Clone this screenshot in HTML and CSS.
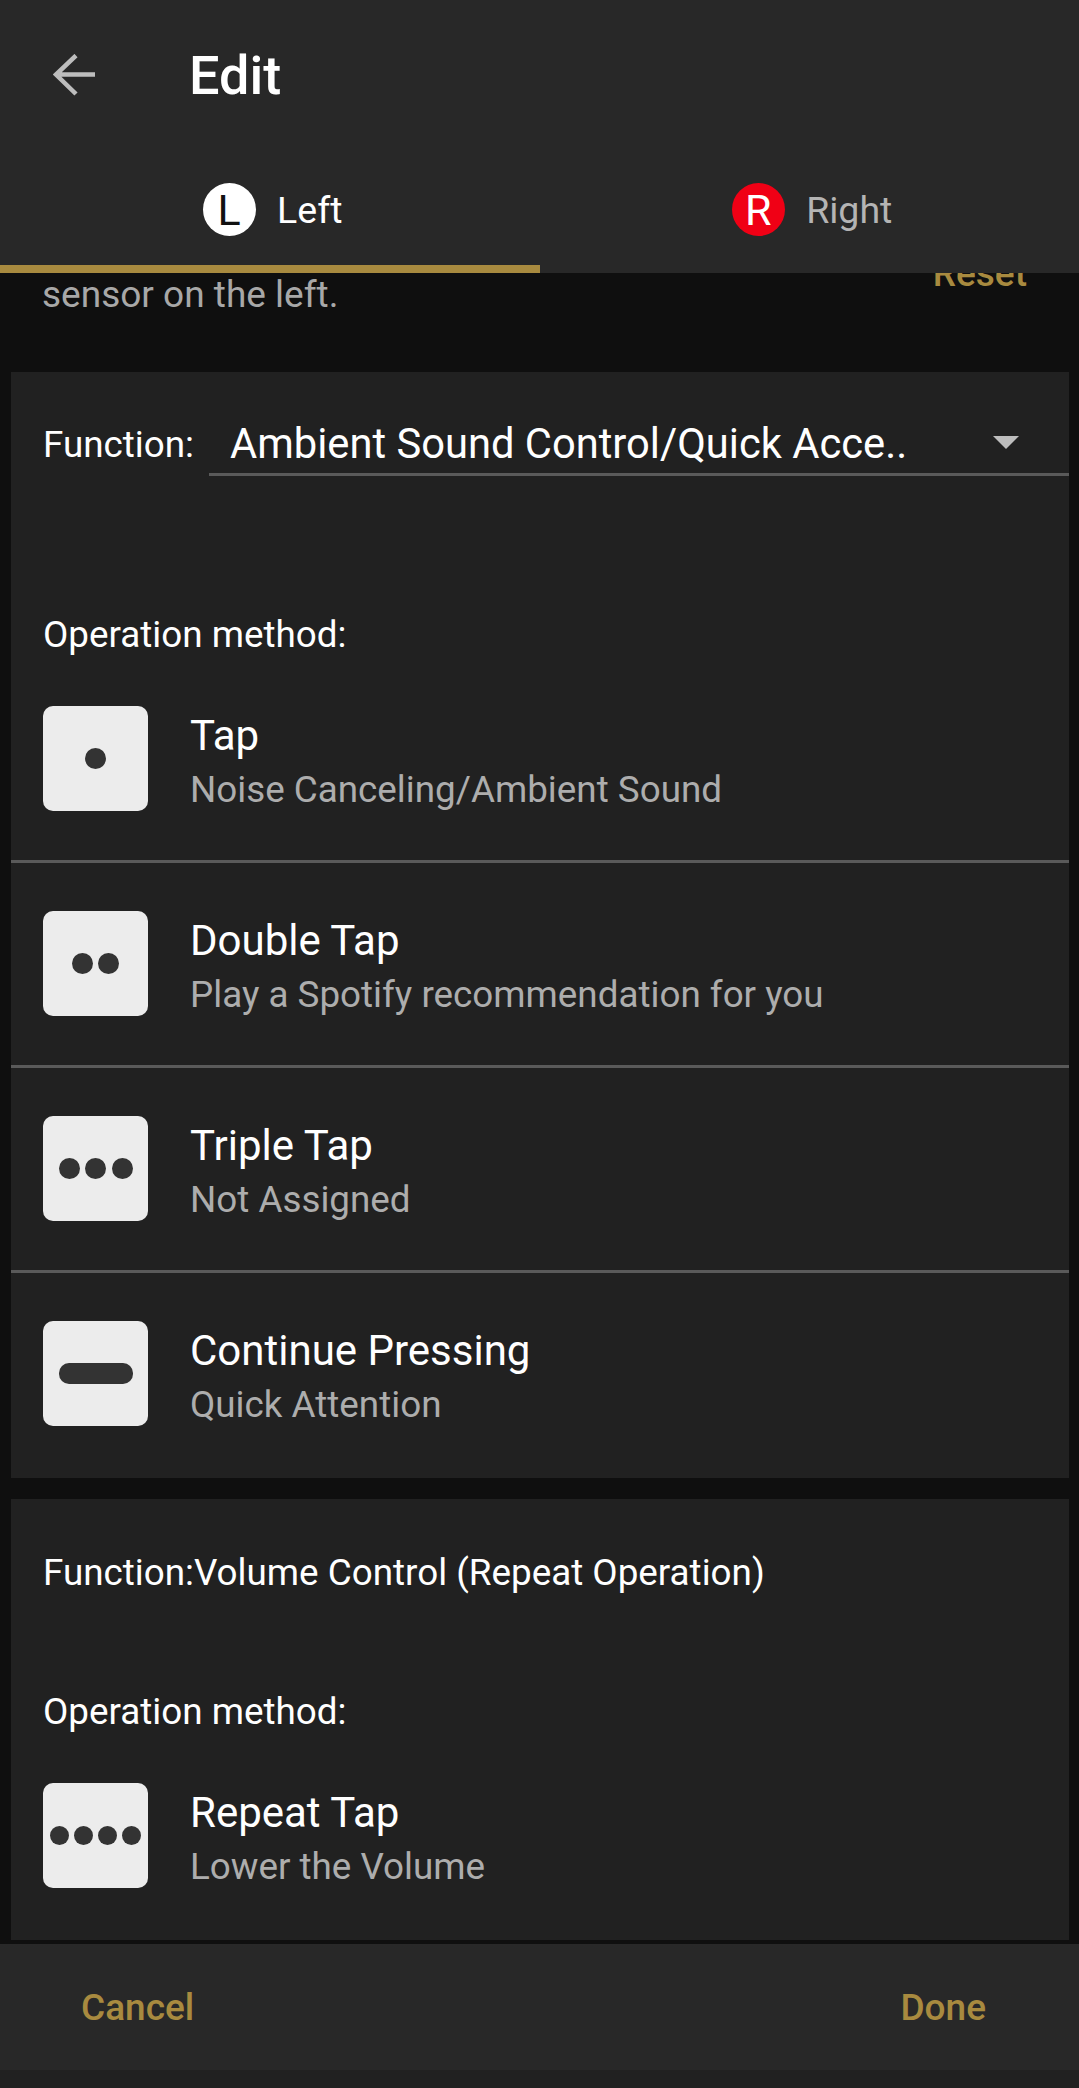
FILE: index.html
```html
<!DOCTYPE html>
<html lang="en">
<head>
    <meta charset="UTF-8">
    <meta name="viewport" content="width=device-width, initial-scale=1.0">
    <title>Edit</title>
    <link rel="stylesheet" href="styles.css">
</head>
<body>
<div class="page">

    <!-- Toolbar and tabs -->
    <header class="header">
        <div class="toolbar">
            <svg class="back" viewBox="0 0 42 42" width="42" height="42">
                <path d="M42 20.5H4M23 1.5L3 20.5L23 40" fill="none" stroke="#bdbdbd" stroke-width="4.5"/>
            </svg>
            <h1 class="title">Edit</h1>
        </div>
        <div class="tabs">
            <div class="tab tab-active">
                <span class="side side-left">L</span>
                <span>Left</span>
            </div>
            <div class="tab">
                <span class="side side-right">R</span>
                <span>Right</span>
            </div>
        </div>
    </header>

    <!-- Scrolled content -->
    <main class="scroll">
        <div class="intro">
            <p class="intro-text">sensor on the left.</p>
            <span class="reset">Reset</span>
        </div>

        <section class="card">
            <div class="function-row">
                <span class="function-label">Function:</span>
                <div class="select">
                    <span class="select-value">Ambient Sound Control/Quick Acce..</span>
                    <span class="select-arrow"></span>
                </div>
            </div>
            <p class="method method-first">Operation method:</p>

            <div class="row">
                <div class="tile"><span class="dot"></span></div>
                <div class="row-text">
                    <div class="row-title">Tap</div>
                    <div class="row-sub">Noise Canceling/Ambient Sound</div>
                </div>
            </div>
            <div class="row">
                <div class="tile"><span class="dot"></span><span class="dot"></span></div>
                <div class="row-text">
                    <div class="row-title">Double Tap</div>
                    <div class="row-sub">Play a Spotify recommendation for you</div>
                </div>
            </div>
            <div class="row">
                <div class="tile"><span class="dot"></span><span class="dot"></span><span class="dot"></span></div>
                <div class="row-text">
                    <div class="row-title">Triple Tap</div>
                    <div class="row-sub">Not Assigned</div>
                </div>
            </div>
            <div class="row">
                <div class="tile"><span class="dash"></span></div>
                <div class="row-text">
                    <div class="row-title">Continue Pressing</div>
                    <div class="row-sub">Quick Attention</div>
                </div>
            </div>
        </section>

        <section class="card">
            <p class="function-line">Function:Volume Control (Repeat Operation)</p>
            <p class="method">Operation method:</p>
            <div class="row">
                <div class="tile tile-four"><span class="dot"></span><span class="dot"></span><span class="dot"></span><span class="dot"></span></div>
                <div class="row-text">
                    <div class="row-title">Repeat Tap</div>
                    <div class="row-sub">Lower the Volume</div>
                </div>
            </div>
        </section>
    </main>

    <!-- Bottom actions -->
    <footer class="footer">
        <span class="action">Cancel</span>
        <span class="action">Done</span>
    </footer>
    <div class="nav-strip"></div>

</div>
</body>
</html>
```

FILE: styles.css
```css
* {
    box-sizing: border-box;
}
html, body {
    margin: 0;
    padding: 0;
}
body {
    background: #0f0f0f;
    color: #fff;
    font-family: Roboto, "Liberation Sans", sans-serif;
}
p, h1 {
    margin: 0;
}
.page {
    height: 2088px;
    display: flex;
    flex-direction: column;
    overflow: hidden;
}

/* Header */
.header {
    flex: none;
    background: #282828;
}
.toolbar {
    height: 150px;
    display: flex;
    align-items: center;
    padding-left: 53px;
}
.back {
    flex: none;
    margin-right: 94px;
}
.title {
    font-size: 54px;
    font-weight: 500;
}
.tabs {
    display: flex;
    height: 123px;
}
.tab {
    flex: 1;
    display: flex;
    align-items: center;
    justify-content: center;
    gap: 21.5px;
    padding: 4px 0 0 5.5px;
    border-bottom: 8px solid transparent;
    color: #b4b4b4;
    font-size: 37.5px;
}
.tab-active {
    color: #fff;
    border-bottom-color: #a88a3f;
}
.side {
    width: 53px;
    height: 53px;
    border-radius: 50%;
    display: flex;
    align-items: center;
    justify-content: center;
    font-size: 43px;
}
.side-left {
    background: #fff;
    color: #111;
}
.side-right {
    background: #f00015;
    color: #fff;
}

/* Scrolled area */
.scroll {
    flex: 1;
    min-height: 0;
    overflow: hidden;
    margin-bottom: 4px;
}
.intro {
    height: 99px;
    display: flex;
    justify-content: space-between;
    align-items: flex-start;
    padding: 0 52px 0 42px;
}
.intro-text {
    font-size: 37px;
    line-height: 44px;
    color: #a8a8a8;
}
.reset {
    margin-top: -21px;
    font-size: 37px;
    font-weight: 500;
    line-height: 44px;
    color: #a88a3f;
}
.card {
    margin: 0 10px 21px 11px;
    background: #212121;
}
.function-row {
    display: flex;
    padding-top: 40px;
    padding-left: 32px;
}
.function-label {
    width: 166px;
    height: 64px;
    line-height: 66px;
    font-size: 36.8px;
}
.select {
    flex: 1;
    height: 64px;
    display: flex;
    align-items: center;
    padding: 2px 50px 0 21px;
    border-bottom: 3px solid #5a5a5a;
}
.select-value {
    flex: 1;
    font-size: 41.7px;
}
.select-arrow {
    margin-top: -2px;
    border-left: 13px solid transparent;
    border-right: 13px solid transparent;
    border-top: 13px solid #bdbdbd;
}
.function-line {
    padding: 52px 0 0 32px;
    font-size: 36.8px;
    line-height: 44px;
}
.method {
    margin: 95px 0 1px;
    padding-left: 32px;
    font-size: 36.8px;
    line-height: 44px;
}
.method-first {
    margin: 137px 0 1px;
}
.row {
    display: flex;
    gap: 42px;
    padding: 48px 0 49px 32px;
    border-bottom: 3px solid #5a5a5a;
}
.row:last-child {
    padding-bottom: 52px;
    border-bottom: none;
}
.tile {
    flex: none;
    width: 105px;
    height: 105px;
    border-radius: 10px;
    background: #ececec;
    display: flex;
    align-items: center;
    justify-content: center;
    gap: 5.5px;
}
.tile-four {
    gap: 5px;
}
.dot {
    width: 21px;
    height: 21px;
    border-radius: 50%;
    background: #333;
}
.tile-four .dot {
    width: 19px;
    height: 19px;
}
.dash {
    width: 74px;
    height: 21px;
    border-radius: 10px;
    background: #333;
}
.row-text {
    height: 105px;
}
.row-title {
    font-size: 42px;
    line-height: 60px;
}
.row-sub {
    font-size: 36.8px;
    line-height: 48px;
    color: #adadad;
}

/* Footer */
.footer {
    flex: none;
    height: 126px;
    display: flex;
    justify-content: space-between;
    align-items: center;
    padding: 0 93px 0 81px;
    background: #282828;
}
.action {
    font-size: 37px;
    font-weight: 500;
    color: #a88a3f;
}
.nav-strip {
    flex: none;
    height: 18px;
    background: #212121;
}
```
